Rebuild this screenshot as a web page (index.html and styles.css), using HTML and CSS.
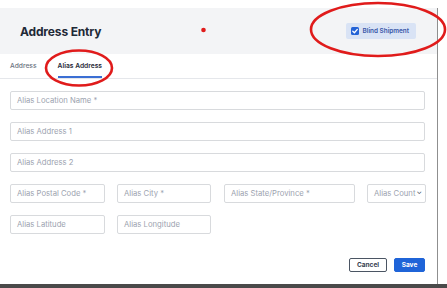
FILE: index.html
```html
<!DOCTYPE html>
<html lang="en">
<head>
    <meta charset="UTF-8">
    <meta name="viewport" content="width=device-width, initial-scale=1.0">
    <title>Address Entry</title>
    <link rel="stylesheet" href="styles.css">
</head>
<body>
    <div class="modal">
        <div class="header">
            <h1>Address Entry</h1>
            <label class="chip">
                <span class="check">
                    <svg width="8" height="8" viewBox="0 0 8 8"><path d="M1.8 4.2 L3.4 5.7 L6.3 2.4" fill="none" stroke="#fff" stroke-width="1.3" stroke-linecap="round" stroke-linejoin="round"/></svg>
                </span>
                Blind Shipment
            </label>
        </div>

        <div class="tabs">
            <span class="tab">Address</span>
            <span class="tab active">Alias Address</span>
        </div>

        <form class="form">
            <div class="row"><div class="field">Alias Location Name *</div></div>
            <div class="row"><div class="field">Alias Address 1</div></div>
            <div class="row"><div class="field">Alias Address 2</div></div>
            <div class="row">
                <div class="field w-postal">Alias Postal Code *</div>
                <div class="field w-city">Alias City *</div>
                <div class="field w-state">Alias State/Province *</div>
                <div class="field w-country select">Alias Count<span class="caret">&#8964;</span></div>
            </div>
            <div class="row">
                <div class="field w-postal">Alias Latitude</div>
                <div class="field w-city">Alias Longitude</div>
            </div>
            <div class="actions">
                <button type="button" class="btn cancel">Cancel</button>
                <button type="button" class="btn save">Save</button>
            </div>
        </form>
    </div>
    <div class="bottom-band"></div>

    <!-- annotation marks drawn over the screenshot -->
    <svg class="marks" width="447" height="288" viewBox="0 0 447 288">
        <circle cx="203.5" cy="30" r="2.3" fill="#e01b1b"/>
        <ellipse cx="378" cy="29.5" rx="67" ry="26.5" fill="none" stroke="#e01b1b" stroke-width="2.6"/>
        <ellipse cx="79" cy="68" rx="33" ry="17.5" fill="none" stroke="#e01b1b" stroke-width="2.6"/>
    </svg>
</body>
</html>
```

FILE: styles.css
```css
body {
    margin: 0;
    padding-top: 8px;
    font-family: Inter, "Noto Sans", sans-serif;
    background: #fff;
    width: 447px;
    height: 280px;
    overflow: hidden;
    position: relative;
}
.modal {
    width: 438px;
    height: 276px;
    border-right: 1px solid #8f8f8f;
    box-sizing: border-box;
}
.header {
    height: 46px;
    background: #f3f4f6;
    display: flex;
    align-items: center;
    justify-content: space-between;
    padding: 0 21px 0 20px;
}
.header h1 {
    margin: 0;
    font-size: 12px;
    font-weight: 700;
    color: #1f2937;
    letter-spacing: -0.15px;
}
.chip {
    display: flex;
    align-items: center;
    gap: 4px;
    height: 16px;
    padding: 0 7px 0 5px;
    background: #d9e3f5;
    border-radius: 2px;
    color: #3a57a8;
    font-size: 6.4px;
    font-weight: 600;
}
.check {
    width: 8px;
    height: 8px;
    background: #2463d6;
    border-radius: 1.5px;
    display: flex;
}
.tabs {
    height: 24px;
    border-bottom: 1px solid #e5e7eb;
    display: flex;
    align-items: stretch;
    padding-left: 10px;
    gap: 21px;
}
.tab {
    display: flex;
    align-items: center;
    font-size: 6.7px;
    font-weight: 500;
    color: #6b7280;
    border-bottom: 2px solid transparent;
    padding-top: 2px;
}
.tab.active {
    color: #1f2937;
    font-weight: 600;
    border-bottom-color: #3b6fd4;
}
.form {
    padding: 12px 12px 0 10px;
    display: flex;
    flex-direction: column;
    gap: 12px;
}
.row {
    display: flex;
    gap: 12px;
}
.field {
    flex: 1;
    height: 19px;
    box-sizing: border-box;
    border: 1px solid #d8dadd;
    border-radius: 2px;
    padding-left: 6px;
    display: flex;
    align-items: center;
    font-size: 7.7px;
    color: #9ca3af;
}
.w-postal { flex: 0 0 95px; }
.w-city { flex: 0 0 94px; }
.w-state { flex: 0 0 131px; margin-left: 1px; }
.w-country { flex: 0 0 59px; }
.select {
    justify-content: space-between;
    padding-right: 3px;
    overflow: hidden;
    white-space: nowrap;
}
.caret {
    font-size: 7px;
    color: #374151;
    margin-top: -4px;
}
.actions {
    display: flex;
    justify-content: flex-end;
    gap: 7px;
    margin-top: 12px;
}
.btn {
    height: 14px;
    padding: 0 6px;
    font-family: inherit;
    font-size: 6.5px;
    font-weight: 700;
    border-radius: 2px;
    cursor: pointer;
}
.cancel {
    width: 38px;
    background: #fff;
    border: 1px solid #4b5563;
    color: #374151;
}
.save {
    width: 31px;
    background: #1f64d8;
    border: 1px solid #1f64d8;
    color: #fff;
}
.bottom-band {
    height: 4px;
    background: #4a4a4a;
}
.marks {
    position: absolute;
    top: 0;
    left: 0;
    pointer-events: none;
}
```
